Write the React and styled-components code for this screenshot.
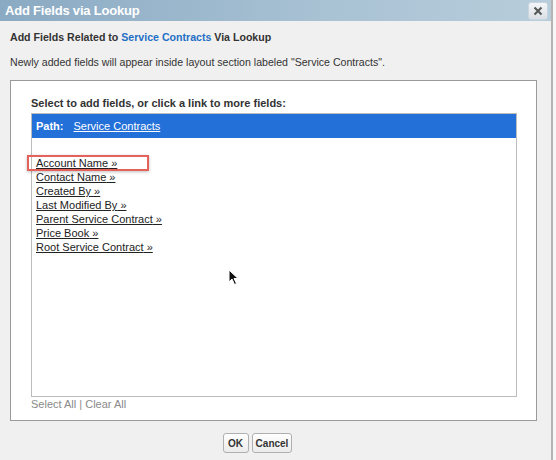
import React from 'react';
import styled, { createGlobalStyle } from 'styled-components';

const GlobalStyle = createGlobalStyle`
  body {
    margin: 0;
    background-color: #f6f6f6;
    font-family: 'Liberation Sans', Arial, sans-serif;
  }
`;

const fields = [
  'Account Name',
  'Contact Name',
  'Created By',
  'Last Modified By',
  'Parent Service Contract',
  'Price Book',
  'Root Service Contract',
];

const App = () => {
  return (
    <>
      <GlobalStyle />
      <StyledPage>
        <StyledDialog>
          <StyledTitleBar>
            <StyledTitle>Add Fields via Lookup</StyledTitle>
            <StyledClose aria-label="Close">
              <svg width="10" height="10" viewBox="0 0 10 10">
                <path d="M1.5 1.5 L8.5 8.5 M8.5 1.5 L1.5 8.5" stroke="#555" strokeWidth="2" />
              </svg>
            </StyledClose>
          </StyledTitleBar>

          <StyledHeading>
            Add Fields Related to <StyledBlue>Service Contracts</StyledBlue> Via Lookup
          </StyledHeading>
          <StyledNote>
            Newly added fields will appear inside layout section labeled "Service Contracts".
          </StyledNote>

          <StyledOuterBox>
            <StyledLabel>Select to add fields, or click a link to more fields:</StyledLabel>
            <StyledInnerBox>
              <StyledPath>
                <b>Path:</b>
                <StyledPathLink>Service Contracts</StyledPathLink>
              </StyledPath>
              <StyledList>
                {fields.map((f) => (
                  <StyledField key={f}>{f} »</StyledField>
                ))}
                <StyledHighlight />
              </StyledList>
              <StyledCursor width="11" height="17" viewBox="0 0 11 17">
                <path d="M1 1 L1 13 L4 10 L6.5 15.5 L8.5 14.5 L6 9.5 L10 9.5 Z" fill="#111" stroke="#fff" strokeWidth="1" />
              </StyledCursor>
            </StyledInnerBox>
            <StyledSelectAll>Select All | Clear All</StyledSelectAll>
          </StyledOuterBox>

          <StyledButtons>
            <StyledButton>OK</StyledButton>
            <StyledButton>Cancel</StyledButton>
          </StyledButtons>
        </StyledDialog>
      </StyledPage>
    </>
  );
};

const StyledPage = styled.div`
  width: 556px;
  height: 460px;
  overflow: hidden;
  display: flex;
`;

const StyledDialog = styled.div`
  width: 551px;
  height: 460px;
  background-color: #f0f0f0;
  border-right: 2px solid #b4b4b4;
  display: flex;
  flex-direction: column;
`;

const StyledTitleBar = styled.div`
  height: 21px;
  flex-shrink: 0;
  display: flex;
  align-items: center;
  justify-content: space-between;
  padding: 0 3px 0 5px;
  background: linear-gradient(to right, #8aaac3, #a9c2d4 60%, #b7cddb);
`;

const StyledTitle = styled.div`
  color: #fff;
  font-weight: bold;
  font-size: 13px;
  letter-spacing: -0.2px;
`;

const StyledClose = styled.div`
  width: 20px;
  height: 18px;
  box-sizing: border-box;
  border: 1px solid #c9d6df;
  border-radius: 3px;
  background: linear-gradient(#f4f6f8, #d9dfe4);
  display: flex;
  align-items: center;
  justify-content: center;
`;

const StyledHeading = styled.div`
  margin: 9px 0 0 10px;
  font-size: 10.6px;
  font-weight: bold;
  line-height: 14px;
  color: #333;
`;

const StyledBlue = styled.span`
  color: #1f6fc5;
`;

const StyledNote = styled.div`
  margin: 11px 0 0 10px;
  font-size: 10.6px;
  line-height: 14px;
  color: #333;
`;

const StyledOuterBox = styled.div`
  margin: 11px 0 0 10px;
  width: 527px;
  height: 341px;
  box-sizing: border-box;
  border: 1px solid #9a9a9a;
  background-color: #fff;
  padding: 15px 0 0 20px;
  display: flex;
  flex-direction: column;
`;

const StyledLabel = styled.div`
  font-size: 11px;
  font-weight: bold;
  line-height: 14px;
  color: #333;
`;

const StyledInnerBox = styled.div`
  position: relative;
  margin-top: 3px;
  width: 486px;
  height: 284px;
  box-sizing: border-box;
  border: 1px solid #bcbcbc;
`;

const StyledPath = styled.div`
  height: 24px;
  background-color: #2270d8;
  color: #fff;
  font-size: 11px;
  display: flex;
  align-items: center;
  gap: 10px;
  padding-left: 4px;
`;

const StyledPathLink = styled.span`
  text-decoration: underline;
`;

const StyledList = styled.div`
  position: relative;
  padding: 18px 0 0 4px;
  display: flex;
  flex-direction: column;
  align-items: flex-start;
`;

const StyledField = styled.span`
  font-size: 11px;
  line-height: 14px;
  color: #222;
  text-decoration: underline;
`;

const StyledHighlight = styled.div`
  position: absolute;
  left: -5px;
  top: 17px;
  width: 122px;
  height: 16px;
  box-sizing: border-box;
  border: 2px solid #e4625c;
  box-shadow: 0 1px 3px rgba(0, 0, 0, 0.25);
`;

const StyledCursor = styled.svg`
  position: absolute;
  left: 196px;
  top: 155px;
`;

const StyledSelectAll = styled.div`
  margin-top: 0;
  font-size: 11px;
  line-height: 14px;
  color: #8a8a8a;
`;

const StyledButtons = styled.div`
  margin-top: 12px;
  display: flex;
  justify-content: center;
  gap: 3px;
  padding-right: 36px;
`;

const StyledButton = styled.div`
  height: 20px;
  box-sizing: border-box;
  padding: 0 3px;
  border: 1px solid #b0b0b0;
  border-radius: 3px;
  background: linear-gradient(#ffffff, #ebebeb);
  font-size: 10px;
  font-weight: bold;
  color: #333;
  display: flex;
  align-items: center;
  min-width: 26px;
  justify-content: center;
`;

export default App;
